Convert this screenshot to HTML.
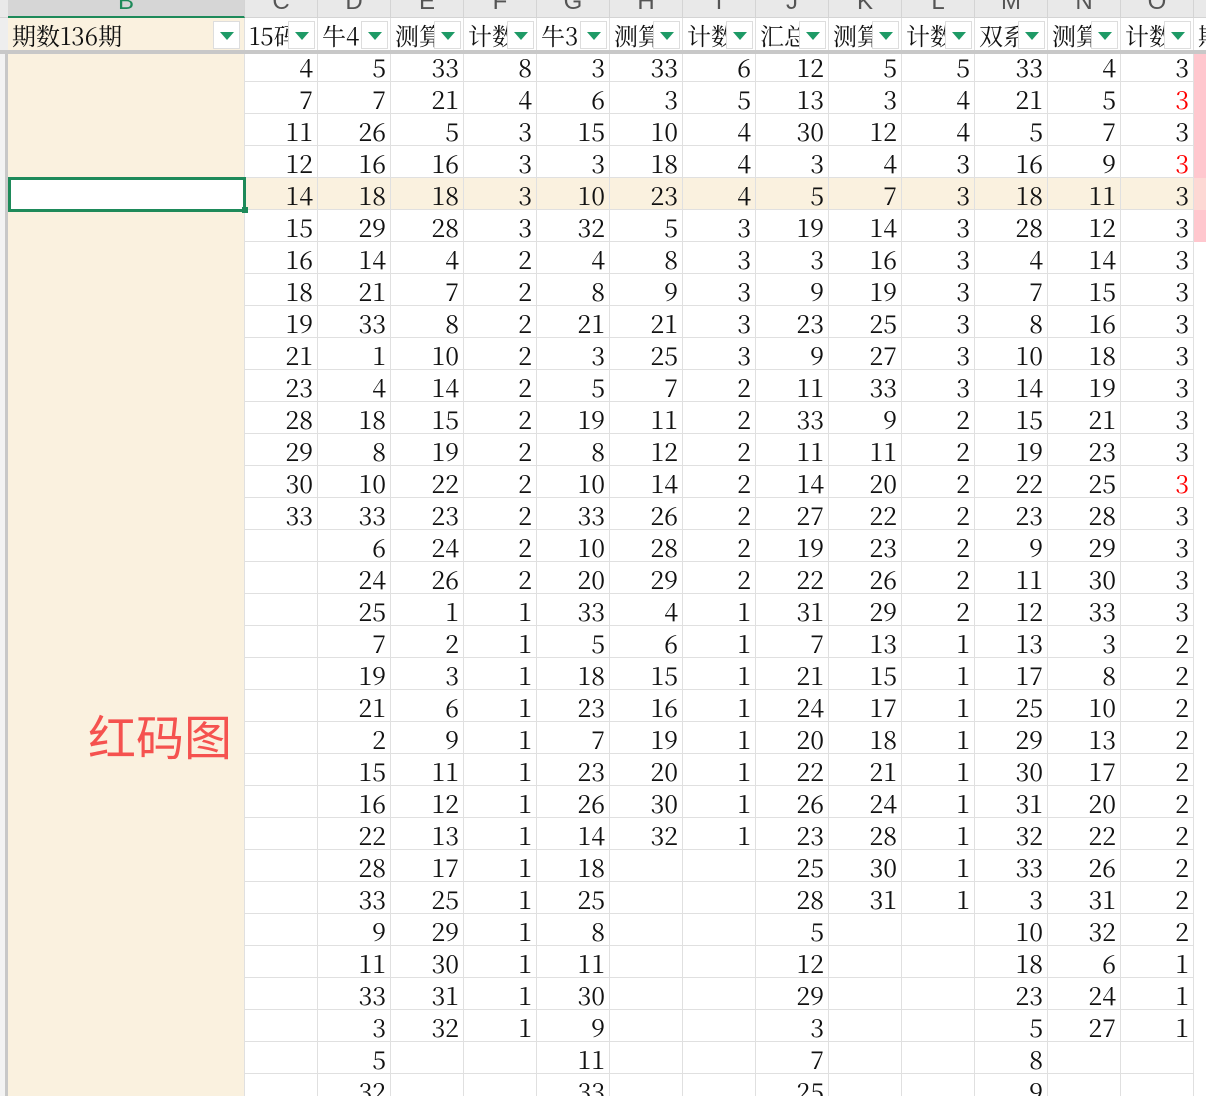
<!DOCTYPE html>
<html><head><meta charset="utf-8"><style>
*{margin:0;padding:0;box-sizing:border-box}
html,body{width:1206px;height:1096px;overflow:hidden}
body{background:#fff;position:relative;font-family:"Liberation Serif","Noto Serif CJK SC",serif}
.abs{position:absolute}
#hdr{left:0;top:0;width:1206px;height:18px;background:#e9e9e9;border-bottom:1px solid #d4d4d4}
.cl{position:absolute;top:-12px;height:30px;text-align:center;font:24px "Liberation Sans",sans-serif;color:#555;border-right:1px solid #d4d4d4}
#filt{left:0;top:18px;width:1206px;height:32px;background:#fff}
.fc{position:absolute;top:0;height:32px;border-right:1px solid #e0e0e0;overflow:hidden;font-family:"Noto Serif CJK SC","Liberation Serif",serif;font-size:24px;line-height:34px;padding-left:4px;white-space:nowrap;color:#111}
.dd{position:absolute;top:3px;right:2px;width:27px;height:28px;background:#fff;border:1px solid #ddd}
.dd:after{content:"";position:absolute;left:6px;top:10px;border-left:7px solid transparent;border-right:7px solid transparent;border-top:8px solid #1e9a66}
#thick{left:0;top:50px;width:1206px;height:4px;background:#c8c8c8}
#bcol{left:8px;top:54px;width:237px;height:1042px;background:#faf1df;border-right:1px solid #e0e0e0}
table{position:absolute;left:245px;top:50px;border-collapse:separate;border-spacing:0;table-layout:fixed}
td{width:73px;height:32px;max-height:32px;border-right:1px solid #e0e0e0;border-bottom:1px solid #e0e0e0;text-align:right;padding:3px 4px 0 0;font-family:"Noto Serif CJK SC","Liberation Serif",serif;font-size:25px;line-height:28px;color:#111;vertical-align:middle;overflow:hidden;white-space:nowrap}
tr.hl td{background:#faf1df}
.r{color:#f00}
</style></head><body>
<div id="hdr" class="abs">
<div class="cl" style="left:8px;width:237px;background:#d6d6d6;color:#1e8a5a;border-bottom:2px solid #1e8a5a;height:30px">B</div>
<div class="cl" style="left:245px;width:73px">C</div>
<div class="cl" style="left:318px;width:73px">D</div>
<div class="cl" style="left:391px;width:73px">E</div>
<div class="cl" style="left:464px;width:73px">F</div>
<div class="cl" style="left:537px;width:73px">G</div>
<div class="cl" style="left:610px;width:73px">H</div>
<div class="cl" style="left:683px;width:73px">I</div>
<div class="cl" style="left:756px;width:73px">J</div>
<div class="cl" style="left:829px;width:73px">K</div>
<div class="cl" style="left:902px;width:73px">L</div>
<div class="cl" style="left:975px;width:73px">M</div>
<div class="cl" style="left:1048px;width:73px">N</div>
<div class="cl" style="left:1121px;width:73px">O</div>
</div>
<div id="filt" class="abs">
<div class="abs" style="left:0;top:0;width:8px;height:32px;background:#eee"></div>
<div class="fc" style="left:8px;width:237px;background:#faf1df">期数136期<div class="dd" style="right:4px"></div></div>
<div class="fc" style="left:245px;width:73px">15码<div class="dd"></div></div>
<div class="fc" style="left:318px;width:73px">牛4<div class="dd"></div></div>
<div class="fc" style="left:391px;width:73px">测算<div class="dd"></div></div>
<div class="fc" style="left:464px;width:73px">计数<div class="dd"></div></div>
<div class="fc" style="left:537px;width:73px">牛3<div class="dd"></div></div>
<div class="fc" style="left:610px;width:73px">测算<div class="dd"></div></div>
<div class="fc" style="left:683px;width:73px">计数<div class="dd"></div></div>
<div class="fc" style="left:756px;width:73px">汇总<div class="dd"></div></div>
<div class="fc" style="left:829px;width:73px">测算<div class="dd"></div></div>
<div class="fc" style="left:902px;width:73px">计数<div class="dd"></div></div>
<div class="fc" style="left:975px;width:73px">双系<div class="dd"></div></div>
<div class="fc" style="left:1048px;width:73px">测算<div class="dd"></div></div>
<div class="fc" style="left:1121px;width:73px">计数<div class="dd"></div></div>
<div class="fc" style="left:1194px;width:20px;padding-left:4px">期</div>
</div>
<div class="abs" style="left:0;top:54px;width:8px;height:1042px;background:#f3f3f3;border-right:3px solid #c8c8c8"></div>
<div id="bcol" class="abs"></div>
<div class="abs" style="left:1194px;top:54px;width:12px;height:188px;background:#ffc7ce"></div>
<table>
<tr><td>4</td><td>5</td><td>33</td><td>8</td><td>3</td><td>33</td><td>6</td><td>12</td><td>5</td><td>5</td><td>33</td><td>4</td><td>3</td></tr>
<tr><td>7</td><td>7</td><td>21</td><td>4</td><td>6</td><td>3</td><td>5</td><td>13</td><td>3</td><td>4</td><td>21</td><td>5</td><td class="r">3</td></tr>
<tr><td>11</td><td>26</td><td>5</td><td>3</td><td>15</td><td>10</td><td>4</td><td>30</td><td>12</td><td>4</td><td>5</td><td>7</td><td>3</td></tr>
<tr><td>12</td><td>16</td><td>16</td><td>3</td><td>3</td><td>18</td><td>4</td><td>3</td><td>4</td><td>3</td><td>16</td><td>9</td><td class="r">3</td></tr>
<tr class="hl"><td>14</td><td>18</td><td>18</td><td>3</td><td>10</td><td>23</td><td>4</td><td>5</td><td>7</td><td>3</td><td>18</td><td>11</td><td>3</td></tr>
<tr><td>15</td><td>29</td><td>28</td><td>3</td><td>32</td><td>5</td><td>3</td><td>19</td><td>14</td><td>3</td><td>28</td><td>12</td><td>3</td></tr>
<tr><td>16</td><td>14</td><td>4</td><td>2</td><td>4</td><td>8</td><td>3</td><td>3</td><td>16</td><td>3</td><td>4</td><td>14</td><td>3</td></tr>
<tr><td>18</td><td>21</td><td>7</td><td>2</td><td>8</td><td>9</td><td>3</td><td>9</td><td>19</td><td>3</td><td>7</td><td>15</td><td>3</td></tr>
<tr><td>19</td><td>33</td><td>8</td><td>2</td><td>21</td><td>21</td><td>3</td><td>23</td><td>25</td><td>3</td><td>8</td><td>16</td><td>3</td></tr>
<tr><td>21</td><td>1</td><td>10</td><td>2</td><td>3</td><td>25</td><td>3</td><td>9</td><td>27</td><td>3</td><td>10</td><td>18</td><td>3</td></tr>
<tr><td>23</td><td>4</td><td>14</td><td>2</td><td>5</td><td>7</td><td>2</td><td>11</td><td>33</td><td>3</td><td>14</td><td>19</td><td>3</td></tr>
<tr><td>28</td><td>18</td><td>15</td><td>2</td><td>19</td><td>11</td><td>2</td><td>33</td><td>9</td><td>2</td><td>15</td><td>21</td><td>3</td></tr>
<tr><td>29</td><td>8</td><td>19</td><td>2</td><td>8</td><td>12</td><td>2</td><td>11</td><td>11</td><td>2</td><td>19</td><td>23</td><td>3</td></tr>
<tr><td>30</td><td>10</td><td>22</td><td>2</td><td>10</td><td>14</td><td>2</td><td>14</td><td>20</td><td>2</td><td>22</td><td>25</td><td class="r">3</td></tr>
<tr><td>33</td><td>33</td><td>23</td><td>2</td><td>33</td><td>26</td><td>2</td><td>27</td><td>22</td><td>2</td><td>23</td><td>28</td><td>3</td></tr>
<tr><td></td><td>6</td><td>24</td><td>2</td><td>10</td><td>28</td><td>2</td><td>19</td><td>23</td><td>2</td><td>9</td><td>29</td><td>3</td></tr>
<tr><td></td><td>24</td><td>26</td><td>2</td><td>20</td><td>29</td><td>2</td><td>22</td><td>26</td><td>2</td><td>11</td><td>30</td><td>3</td></tr>
<tr><td></td><td>25</td><td>1</td><td>1</td><td>33</td><td>4</td><td>1</td><td>31</td><td>29</td><td>2</td><td>12</td><td>33</td><td>3</td></tr>
<tr><td></td><td>7</td><td>2</td><td>1</td><td>5</td><td>6</td><td>1</td><td>7</td><td>13</td><td>1</td><td>13</td><td>3</td><td>2</td></tr>
<tr><td></td><td>19</td><td>3</td><td>1</td><td>18</td><td>15</td><td>1</td><td>21</td><td>15</td><td>1</td><td>17</td><td>8</td><td>2</td></tr>
<tr><td></td><td>21</td><td>6</td><td>1</td><td>23</td><td>16</td><td>1</td><td>24</td><td>17</td><td>1</td><td>25</td><td>10</td><td>2</td></tr>
<tr><td></td><td>2</td><td>9</td><td>1</td><td>7</td><td>19</td><td>1</td><td>20</td><td>18</td><td>1</td><td>29</td><td>13</td><td>2</td></tr>
<tr><td></td><td>15</td><td>11</td><td>1</td><td>23</td><td>20</td><td>1</td><td>22</td><td>21</td><td>1</td><td>30</td><td>17</td><td>2</td></tr>
<tr><td></td><td>16</td><td>12</td><td>1</td><td>26</td><td>30</td><td>1</td><td>26</td><td>24</td><td>1</td><td>31</td><td>20</td><td>2</td></tr>
<tr><td></td><td>22</td><td>13</td><td>1</td><td>14</td><td>32</td><td>1</td><td>23</td><td>28</td><td>1</td><td>32</td><td>22</td><td>2</td></tr>
<tr><td></td><td>28</td><td>17</td><td>1</td><td>18</td><td></td><td></td><td>25</td><td>30</td><td>1</td><td>33</td><td>26</td><td>2</td></tr>
<tr><td></td><td>33</td><td>25</td><td>1</td><td>25</td><td></td><td></td><td>28</td><td>31</td><td>1</td><td>3</td><td>31</td><td>2</td></tr>
<tr><td></td><td>9</td><td>29</td><td>1</td><td>8</td><td></td><td></td><td>5</td><td></td><td></td><td>10</td><td>32</td><td>2</td></tr>
<tr><td></td><td>11</td><td>30</td><td>1</td><td>11</td><td></td><td></td><td>12</td><td></td><td></td><td>18</td><td>6</td><td>1</td></tr>
<tr><td></td><td>33</td><td>31</td><td>1</td><td>30</td><td></td><td></td><td>29</td><td></td><td></td><td>23</td><td>24</td><td>1</td></tr>
<tr><td></td><td>3</td><td>32</td><td>1</td><td>9</td><td></td><td></td><td>3</td><td></td><td></td><td>5</td><td>27</td><td>1</td></tr>
<tr><td></td><td>5</td><td></td><td></td><td>11</td><td></td><td></td><td>7</td><td></td><td></td><td>8</td><td></td><td></td></tr>
<tr><td></td><td>32</td><td></td><td></td><td>33</td><td></td><td></td><td>25</td><td></td><td></td><td>9</td><td></td><td></td></tr>
</table>
<div class="abs" style="left:1194px;top:178px;width:12px;height:32px;background:#fdd8d4"></div>
<div id="thick" class="abs"></div>
<div class="abs" style="left:8px;top:177px;width:238px;height:35px;border:3px solid #1e8a5a;background:#fff"></div>
<div class="abs" style="left:242px;top:207px;width:6px;height:6px;background:#1e8a5a"></div>
<div class="abs" style="left:88px;top:705px;font:48px 'Noto Sans CJK SC',sans-serif;color:#f5524f;line-height:58px">红码图</div>
</body></html>
